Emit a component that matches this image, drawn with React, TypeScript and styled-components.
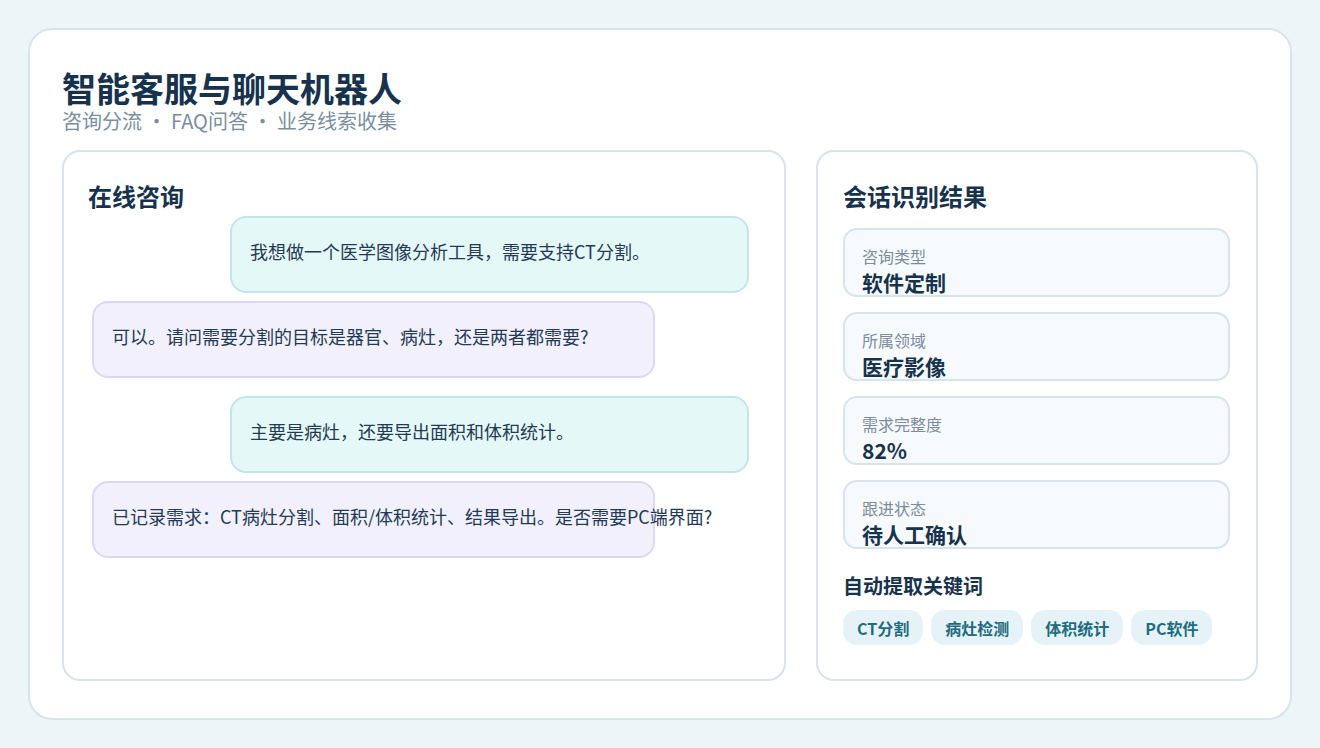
import React from "react";
import styled, { createGlobalStyle } from "styled-components";

const GlobalStyle = createGlobalStyle`
  html, body {
    margin: 0;
    padding: 0;
    background: #eef5f9;
  }
  body {
    font-family: "Noto Sans CJK SC", "Noto Sans", sans-serif;
    color: #17324d;
  }
  * { box-sizing: border-box; }
`;

const Page = styled.div`
  padding: 28px;
`;

const Card = styled.div`
  height: 692px;
  background: #ffffff;
  border: 2px solid #d5e4ed;
  border-radius: 24px;
  padding: 40px 32px 37px 32px;
  display: flex;
  flex-direction: column;
`;

const Title = styled.h1`
  margin: 0;
  font-size: 34px;
  line-height: 36px;
  font-weight: 700;
  color: #17324d;
`;

const Subtitle = styled.div`
  margin-top: 2px;
  font-size: 20px;
  line-height: 26px;
  color: #7b8ea0;
  margin-bottom: 16px;
`;

const Columns = styled.div`
  flex: 1;
  display: grid;
  grid-template-columns: 724fr 442fr;
  gap: 30px;
  min-height: 0;
`;

const Panel = styled.section<{ $pad: string }>`
  border: 2px solid #d5e4ed;
  border-radius: 18px;
  padding: ${(p) => p.$pad};
  display: flex;
  flex-direction: column;
  background: #ffffff;
`;

const PanelTitle = styled.h2`
  margin: 0;
  font-size: 24px;
  line-height: 34px;
  font-weight: 700;
  color: #17324d;
`;

const Messages = styled.div`
  display: flex;
  flex-direction: column;
  margin-top: 3px;
`;

const Bubble = styled.div<{ $user: boolean; $gap: number }>`
  width: ${(p) => (p.$user ? 519 : 563)}px;
  height: 77px;
  margin-top: ${(p) => p.$gap}px;
  margin-left: ${(p) => (p.$user ? "auto" : "4px")};
  margin-right: ${(p) => (p.$user ? "11px" : "0")};
  padding: 20px 18px 0 18px;
  border-radius: 16px;
  border: 2px solid ${(p) => (p.$user ? "#c2e5ea" : "#ddd7f5")};
  background: ${(p) => (p.$user ? "#e5f8f8" : "#f2f0fd")};
  font-size: 18px;
  line-height: 27px;
  color: #233a55;
  white-space: nowrap;
`;

const InfoList = styled.div`
  display: flex;
  flex-direction: column;
  gap: 15px;
  margin-top: 15px;
`;

const InfoCard = styled.div`
  height: 69px;
  border: 2px solid #d5e4ed;
  border-radius: 14px;
  background: #f6fafd;
  padding: 15px 17px 0 17px;
`;

const InfoLabel = styled.div`
  font-size: 16px;
  line-height: 22px;
  color: #7c8c9c;
`;

const InfoValue = styled.div`
  margin-top: 2px;
  font-size: 21px;
  line-height: 27px;
  font-weight: 700;
  color: #17324d;
`;

const KeywordTitle = styled.h3`
  margin: 23px 0 0 0;
  font-size: 20px;
  line-height: 28px;
  font-weight: 700;
  color: #17324d;
`;

const Tags = styled.div`
  display: flex;
  gap: 8px;
  margin-top: 10px;
`;

const Tag = styled.span`
  height: 35px;
  padding: 0 14px;
  border-radius: 14px;
  background: #e5f3f8;
  color: #1f6b7f;
  font-size: 16px;
  font-weight: 700;
  display: inline-flex;
  align-items: center;
`;

const messages = [
  { user: true, gap: 0, text: "我想做一个医学图像分析工具，需要支持CT分割。" },
  { user: false, gap: 8, text: "可以。请问需要分割的目标是器官、病灶，还是两者都需要?" },
  { user: true, gap: 18, text: "主要是病灶，还要导出面积和体积统计。" },
  { user: false, gap: 8, text: "已记录需求：CT病灶分割、面积/体积统计、结果导出。是否需要PC端界面?" },
];

const infos = [
  { label: "咨询类型", value: "软件定制" },
  { label: "所属领域", value: "医疗影像" },
  { label: "需求完整度", value: "82%" },
  { label: "跟进状态", value: "待人工确认" },
];

const tags = ["CT分割", "病灶检测", "体积统计", "PC软件"];

export default function App() {
  return (
    <>
      <GlobalStyle />
      <Page>
        <Card>
          <Title>智能客服与聊天机器人</Title>
          <Subtitle>咨询分流 · FAQ问答 · 业务线索收集</Subtitle>
          <Columns>
            <Panel $pad="27px 24px 24px 24px">
              <PanelTitle>在线咨询</PanelTitle>
              <Messages>
                {messages.map((m, i) => (
                  <Bubble key={i} $user={m.user} $gap={m.gap}>
                    {m.text}
                  </Bubble>
                ))}
              </Messages>
            </Panel>
            <Panel $pad="27px 26px 24px 25px">
              <PanelTitle>会话识别结果</PanelTitle>
              <InfoList>
                {infos.map((it) => (
                  <InfoCard key={it.label}>
                    <InfoLabel>{it.label}</InfoLabel>
                    <InfoValue>{it.value}</InfoValue>
                  </InfoCard>
                ))}
              </InfoList>
              <KeywordTitle>自动提取关键词</KeywordTitle>
              <Tags>
                {tags.map((t) => (
                  <Tag key={t}>{t}</Tag>
                ))}
              </Tags>
            </Panel>
          </Columns>
        </Card>
      </Page>
    </>
  );
}
